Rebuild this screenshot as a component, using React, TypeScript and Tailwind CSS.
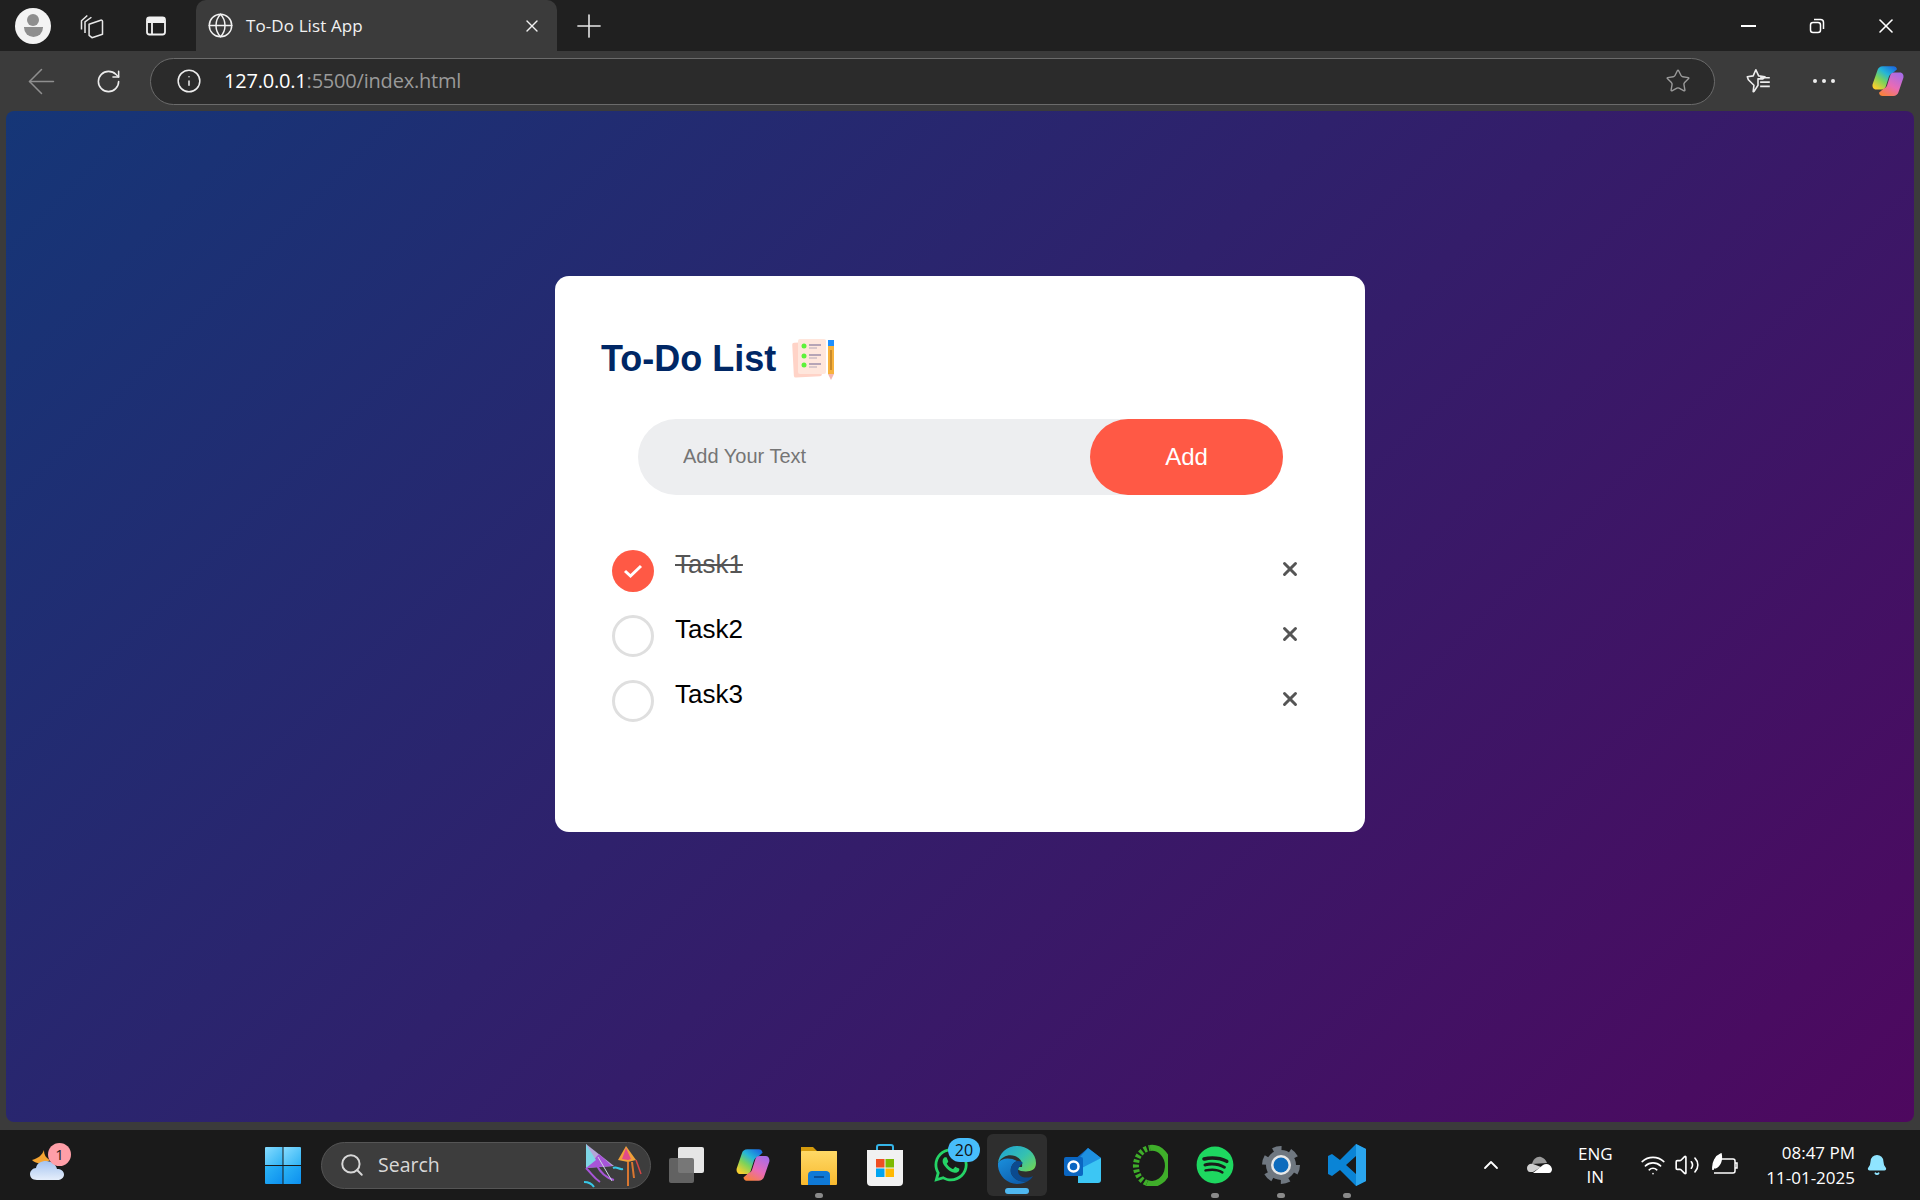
import React from 'react'
import { ArrowLeft, Bell, ChevronUp, Globe, Info, Plus, RotateCw, Search, Star, Volume2, Wifi, X } from 'lucide-react'
import { FaSpotify, FaWhatsapp } from 'react-icons/fa'

const Copilot = ({ size, id }: { size: number; id: string }) => (
  <svg width={size} height={size} viewBox="0 0 32 32">
    <defs>
      <linearGradient id={`${id}a`} x1="0.8" y1="0" x2="0.1" y2="0.9">
        <stop offset="0" stopColor="#1b6fe0" />
        <stop offset="0.35" stopColor="#25b6d8" />
        <stop offset="0.65" stopColor="#7bd35a" />
        <stop offset="1" stopColor="#f7cf2f" />
      </linearGradient>
      <linearGradient id={`${id}b`} x1="0.8" y1="0" x2="0.2" y2="1">
        <stop offset="0" stopColor="#a66ce8" />
        <stop offset="0.55" stopColor="#e96bb5" />
        <stop offset="1" stopColor="#f8813c" />
      </linearGradient>
    </defs>
    <path d="M11 2h10c2 0 3 1 3.500 3L20 9c-2 .5-3 2-3.500 4l-2.500 8c-.5 2-2 3-4 3H5c-3 0-4-2.500-3.500-5L6 6c.6-2.500 2.500-4 5-4z" fill={`url(#${id}a)`} />
    <path d="M21 30H11c-2 0-3-1-3.500-3l4.500-4c2-.5 3-2 3.500-4l2.500-8c.5-2 2-3 4-3h5c3 0 4 2.500 3.500 5L26 26c-.6 2.500-2.500 4-5 4z" fill={`url(#${id}b)`} />
  </svg>
)

const Collections = () => (
  <svg width="28" height="28" viewBox="0 0 24 24" fill="none" stroke="#e8e8e8" strokeWidth="1.300" strokeLinejoin="round">
    <path d="M3 15V7.500L8 3" />
    <path d="M6 18V8.500L11.500 4.500" />
    <path d="M9.500 10.500l10-3.500c.7-.2 1.500.3 1.500 1v11l-9 3-2.500-2z" />
  </svg>
)

const TabActions = () => (
  <svg width="24" height="24" viewBox="0 0 24 24" fill="none" stroke="#f2f2f2" strokeWidth="1.800">
    <rect x="3" y="3.500" width="18" height="17" rx="2.500" />
    <path d="M3 8h18M8 8v12" />
    <path d="M4 4h16v4H4z" fill="#f2f2f2" stroke="none" />
  </svg>
)

const Restore = () => (
  <svg width="18" height="18" viewBox="0 0 18 18" fill="none" stroke="#fff" strokeWidth="1.500">
    <rect x="2.500" y="5.500" width="10" height="10" rx="2.500" />
    <path d="M6 2.500h6.500c1.800 0 3 1.200 3 3V12" />
  </svg>
)

const FavoritesStar = () => (
  <svg width="30" height="30" viewBox="0 0 28 28" fill="none" stroke="#ededed" strokeWidth="1.500" strokeLinejoin="round">
    <path d="M12 3.500l2.600 5.700 5.900.8-2 2h-4.500v6l-3.500 5.500-1 .5.7-6L5 12.800l-1-2.700 5.500-.9z" />
    <path d="M16 14h9M16 18h9M16 22h9" transform="translate(0 -3)" />
  </svg>
)

const Weather = () => (
  <svg width="38" height="38" viewBox="0 0 38 38">
    <defs>
      <linearGradient id="cloudFill" x1="0" y1="0" x2="0" y2="1">
        <stop offset="0" stopColor="#a5c4f0" />
        <stop offset="1" stopColor="#e5eefb" />
      </linearGradient>
    </defs>
    <path d="M15 4c-2 5-5 8-12 10 4 4 12 5 18 0-4-2-6-5-6-10z" fill="#f5a431" />
    <path d="M8 34c-5 0-7-3-7-6s3-6 6-6c1-5 5-7 10-7s10 3 11 8c4 0 7 2 7 5.500S32 34 28 34z" fill="url(#cloudFill)" />
  </svg>
)

const StartLogo = () => (
  <svg width="36" height="38" viewBox="0 0 36 38">
    <defs>
      <linearGradient id="winA" x1="0" y1="0" x2="1" y2="1">
        <stop offset="0" stopColor="#86dcff" />
        <stop offset="1" stopColor="#2fb2f4" />
      </linearGradient>
      <linearGradient id="winB" x1="0" y1="0" x2="1" y2="1">
        <stop offset="0" stopColor="#2cb5f6" />
        <stop offset="1" stopColor="#0c8fef" />
      </linearGradient>
    </defs>
    <path d="M1 1h16.500v18H0V2a1 1 0 0 1 1-1z" fill="url(#winA)" />
    <path d="M18.500 1H35a1 1 0 0 1 1 1v17H18.500z" fill="url(#winA)" />
    <path d="M0 20h17.500v18H1a1 1 0 0 1-1-1z" fill="url(#winB)" />
    <path d="M18.500 20H36v17a1 1 0 0 1-1 1H18.500z" fill="url(#winB)" />
  </svg>
)

const Kites = () => (
  <svg width="62" height="46" viewBox="0 0 62 46" fill="none">
    <path d="M4 2L4 26 32 24z" fill="#b4a6d8" />
    <path d="M4 26l13-14 13 12z" fill="#a855d8" />
    <path d="M4 2l10 16L4 26z" fill="#7fd6e6" />
    <path d="M4 26c6 6 8 10 14 14M14 22c4 8 10 14 18 16" stroke="#a855d8" strokeWidth="2" />
    <path d="M2 40c4 0 8 2 10 5" stroke="#38c8e8" strokeWidth="2" />
    <path d="M16 15l14 24" stroke="#cbd5e1" strokeWidth="1" />
    <path d="M31 26c4-2 6 2 10 1" stroke="#38c8e8" strokeWidth="2" />
    <path d="M44 4l-8 14 10 2 8-2z" fill="#f0a03a" />
    <path d="M44 6l-4 11 6 1 3-1z" fill="#e14a8a" />
    <path d="M46 20v24M50 20l2 16" stroke="#d97730" strokeWidth="2" />
    <path d="M54 18l5 14" stroke="#d64545" strokeWidth="1.500" />
  </svg>
)

const TaskView = () => (
  <svg width="38" height="38" viewBox="0 0 38 38">
    <rect x="10" y="1" width="26" height="26" rx="2" fill="#e6e6e6" />
    <rect x="1" y="12" width="25" height="25" rx="2" fill="#6a6a6a" fillOpacity="0.9" />
  </svg>
)

const Explorer = () => (
  <svg width="38" height="40" viewBox="0 0 38 40">
    <defs>
      <linearGradient id="folderFill" x1="0" y1="0" x2="0" y2="1">
        <stop offset="0" stopColor="#ffd966" />
        <stop offset="1" stopColor="#f8b92e" />
      </linearGradient>
    </defs>
    <path d="M1 2h12l4 4h20v6H1z" fill="#d49a0c" />
    <rect x="1" y="6" width="36" height="34" rx="1" fill="url(#folderFill)" />
    <path d="M8 40V30c0-3 2-4 4-4h14c2 0 4 1 4 4v10z" fill="#0f79d6" />
    <rect x="14" y="31" width="10" height="2" fill="#0a4f96" />
  </svg>
)

const Store = () => (
  <svg width="38" height="42" viewBox="0 0 38 42">
    <path d="M11 7V3c0-1 1-2 2-2h12c1 0 2 1 2 2v4" fill="none" stroke="#35b5e8" strokeWidth="2" />
    <path d="M1 6h36v32a4 4 0 0 1-4 4H5a4 4 0 0 1-4-4z" fill="#f1f1f1" />
    <rect x="10" y="15" width="8.500" height="8.500" fill="#ef4f23" />
    <rect x="19.500" y="15" width="8.500" height="8.500" fill="#7eba01" />
    <rect x="10" y="24.500" width="8.500" height="8.500" fill="#01a4ef" />
    <rect x="19.500" y="24.500" width="8.500" height="8.500" fill="#ffb902" />
  </svg>
)

const Edge = () => (
  <svg width="38" height="38" viewBox="0 0 38 38">
    <defs>
      <linearGradient id="edgeTop" x1="0" y1="0" x2="1" y2="0.8">
        <stop offset="0" stopColor="#1d9fd8" />
        <stop offset="0.6" stopColor="#35c1b0" />
        <stop offset="1" stopColor="#6bd35c" />
      </linearGradient>
      <linearGradient id="edgeBlue" x1="0" y1="0" x2="0.7" y2="1">
        <stop offset="0" stopColor="#1a8fdc" />
        <stop offset="1" stopColor="#0d5fae" />
      </linearGradient>
    </defs>
    <path d="M19 0C9 0 1 7 0 17c4-7 11-9 17-7 5 2 8 6 7 11h-4c-2 0-1 3 3 4 6 1 15 1 15-8C38 7 29 0 19 0z" fill="url(#edgeTop)" />
    <path d="M0 17C-1 28 8 38 19 38c4 0 8-1 11-3-8 2-15-2-17-8-1-5 1-10 6-12-7-4-16-3-19 2z" fill="url(#edgeBlue)" />
    <path d="M13 27c2 6 9 10 17 8 2-1 4-3 5-5-5 3-15 2-15-5 0-3 2-6 5-8-2-2-4-2-6-2-5 2-7 7-6 12z" fill="#0b4a8f" />
  </svg>
)

const Outlook = () => (
  <svg width="38" height="38" viewBox="0 0 38 38">
    <path d="M10 14L24 2l13 10v10H10z" fill="#1068c4" />
    <path d="M24 2l13 10-20 12-7-6z" fill="#1e90e0" />
    <path d="M14 24l23-12v22c0 2-1 3-3 3H14z" fill="#3cc6f4" />
    <rect x="0" y="11" width="19" height="19" rx="2" fill="#0a66c2" />
    <circle cx="9.500" cy="20.500" r="5" fill="none" stroke="#fff" strokeWidth="2.500" />
  </svg>
)

const RingApp = () => (
  <svg width="38" height="42" viewBox="0 0 38 42" fill="none">
    <path d="M20 4a16 18 0 1 1-3 35" stroke="#3fae2a" strokeWidth="6" />
    <path d="M17 39A16 18 0 0 1 20 4" stroke="#3fae2a" strokeWidth="6" strokeDasharray="3 2" />
  </svg>
)

const Gear = () => (
  <svg width="38" height="40" viewBox="0 0 38 40" fill="none">
    <circle cx="19" cy="20" r="15" fill="#6f7780" />
    <circle cx="19" cy="20" r="16.500" stroke="#6f7780" strokeWidth="5" strokeDasharray="8.600 8.700" />
    <circle cx="19" cy="20" r="10" fill="#e8e8e8" />
    <circle cx="19" cy="20" r="7.500" fill="#0f6cbd" />
  </svg>
)

const VsCode = () => (
  <svg width="38" height="42" viewBox="0 0 38 42">
    <path d="M28 0l10 5v32l-10 5-16-16-8 6-4-2V12l4-2 8 6zM28 12l-10 9 10 9z" fill="#0a84d6" fillRule="evenodd" />
    <path d="M28 0l10 5v32l-10 5z" fill="#2aa5ee" />
  </svg>
)

const OneDrive = () => (
  <svg width="26" height="18" viewBox="0 0 26 18">
    <path d="M6 8c1-5 5-8 9-7 3 1 5 3 6 6z" fill="#9a9a9a" />
    <path d="M1 12c0-3 3-5 6-4l8 3-8 5H4c-2 0-3-2-3-4z" fill="#d0d0d0" />
    <path d="M7 17l10-8c3-2 8-1 9 4 0 2-1 4-3 4z" fill="#ffffff" />
  </svg>
)

const Battery = () => (
  <svg width="26" height="24" viewBox="0 0 26 24" fill="none" stroke="#fff" strokeWidth="1.500">
    <path d="M9 6h12c1 0 2 1 2 2v10c0 1-1 2-2 2H2" />
    <path d="M23 10h2v5h-2" />
    <path d="M1 17C0 9 4 3 9 1c1 5 0 12-6 14" fill="#fff" />
  </svg>
)

const Dot = () => <div className="w-[8px] h-[5px] rounded-full bg-[#8a8a8a]" />

const TaskbarApp = ({ children, dot }: { children: React.ReactNode; dot?: boolean }) => (
  <div className="relative w-[66px] h-[70px] flex items-center justify-center">
    {children}
    {dot && (
      <div className="absolute bottom-[2px] left-[29px]">
        <Dot />
      </div>
    )}
  </div>
)

const tasks = [
  { name: 'Task1', done: true },
  { name: 'Task2', done: false },
  { name: 'Task3', done: false },
]

const App = () => {
  return (
    <div className="w-[1920px] h-[1200px] flex flex-col overflow-hidden bg-[#3b3b3b] [font-family:'Open_Sans',sans-serif]">
      <div className="h-[51px] bg-[#202020] flex items-end shrink-0">
        <div className="h-[51px] flex items-center">
          <div className="ml-[15px] w-[36px] h-[36px] rounded-full bg-[#f3f3f3] flex flex-col items-center justify-center">
            <div className="w-[12px] h-[12px] rounded-full bg-[#8e8e8e]" />
            <div className="w-[19px] h-[10px] mt-[1px] rounded-b-full rounded-t-[4px] bg-[#8e8e8e]" />
          </div>
          <div className="ml-[27px]">
            <Collections />
          </div>
          <div className="ml-[38px]">
            <TabActions />
          </div>
        </div>
        <div className="ml-[28px] w-[361px] h-[51px] bg-[#3b3b3b] rounded-t-[10px] flex items-center pl-[11px] pr-[15px] text-[#f2f2f2]">
          <Globe size={27} strokeWidth={1.3} />
          <span className="ml-[12px] text-[17px] tracking-[0.1px] flex-1">To-Do List App</span>
          <X size={20} strokeWidth={1.6} />
        </div>
        <div className="h-[51px] flex items-center ml-[13px] text-[#e8e8e8]">
          <Plus size={38} strokeWidth={1} />
        </div>
        <div className="flex-1" />
        <div className="h-[51px] flex items-center gap-[45px] pr-[22px] text-white">
          <div className="w-[24px] flex justify-center">
            <div className="w-[15px] h-[2px] bg-white" />
          </div>
          <div className="w-[24px] flex justify-center">
            <Restore />
          </div>
          <div className="w-[24px] flex justify-center">
            <X size={24} strokeWidth={1.6} />
          </div>
        </div>
      </div>

      <div className="h-[60px] flex items-center shrink-0 text-[#ededed]">
        <ArrowLeft className="ml-[21px] text-[#8f8f8f]" size={41} strokeWidth={0.9} />
        <RotateCw className="ml-[33px]" size={27} strokeWidth={1.4} />
        <div className="ml-[28px] w-[1565px] h-[47px] rounded-full bg-[#2b2b2b] border border-[#6b6b6b] flex items-center pl-[25px] pr-[23px]">
          <Info size={26} strokeWidth={1.4} />
          <div className="ml-[22px] flex-1 text-[20px] text-[#9a9a9a] tracking-[-0.2px]">
            <span className="text-white">127.0.0.1</span>:5500/index.html
          </div>
          <Star size={26} strokeWidth={1.3} className="text-[#9a9a9a]" />
        </div>
        <div className="ml-[28px]">
          <FavoritesStar />
        </div>
        <div className="ml-[40px] flex gap-[5px]">
          <div className="w-[4px] h-[4px] rounded-full bg-[#ededed]" />
          <div className="w-[4px] h-[4px] rounded-full bg-[#ededed]" />
          <div className="w-[4px] h-[4px] rounded-full bg-[#ededed]" />
        </div>
        <div className="ml-[36px]">
          <Copilot size={34} id="copA" />
        </div>
      </div>

      <div className="h-[1011px] shrink-0 mx-[6px] rounded-lg bg-linear-[135deg,#153677,#4e085f] flex justify-center items-start pt-[165px] [font-family:'Liberation_Sans',sans-serif]">
        <div className="w-[810px] h-[556px] bg-white rounded-[14px] pt-[59px] pl-[46px]">
          <div className="flex items-center h-[48px]">
            <h2 className="text-[36px] font-bold text-[#002765] leading-none">To-Do List</h2>
            <svg className="ml-[16px]" width="44" height="44" viewBox="0 0 44 44">
              <rect x="1" y="5" width="28" height="35" rx="2" fill="#ffd3c7" transform="rotate(-3 15 22)" />
              <rect x="6" y="2" width="28" height="35" rx="2" fill="#ffe6dc" />
              <circle cx="12" cy="9" r="2.500" fill="#5df23a" />
              <circle cx="12" cy="19" r="2.500" fill="#5df23a" />
              <circle cx="12" cy="28" r="2.500" fill="#5df23a" />
              <path d="M17 8h12M17 18h12M17 27h12" stroke="#6f6390" strokeWidth="1.200" />
              <path d="M17 11h8M17 21h8M17 30h8" stroke="#b5a8b8" strokeWidth="1.200" />
              <rect x="36" y="3" width="6" height="6" fill="#1e90ff" />
              <rect x="36" y="9" width="6" height="28" fill="#f7b23d" />
              <rect x="38" y="13" width="2" height="20" fill="#c98a2a" />
              <path d="M36 37h6l-3 6z" fill="#f4b6b0" />
            </svg>
          </div>
          <div className="ml-[37px] mt-[36px] w-[645px] h-[76px] rounded-full bg-[#edeef0] flex items-center">
            <input
              className="flex-1 min-w-0 bg-transparent outline-none pl-[45px] pb-[2px] text-[20px] placeholder:text-[#757575]"
              placeholder="Add Your Text"
            />
            <button className="w-[193px] h-[76px] rounded-full bg-[#ff5945] text-white text-[24px]">Add</button>
          </div>
          <ul className="mt-[51px] pl-[11px] w-[701px]">
            {tasks.map((t) => (
              <li key={t.name} className="h-[65px] flex items-start">
                <div
                  className={
                    t.done
                      ? 'mt-[4px] w-[42px] h-[42px] rounded-full bg-[#ff5945] flex items-center justify-center'
                      : 'mt-[4px] w-[42px] h-[42px] rounded-full border-[3.5px] border-[#dfdfdf]'
                  }
                >
                  {t.done && (
                    <svg width="22" height="18" viewBox="0 0 22 18" fill="none" stroke="#fff" strokeWidth="3">
                      <path d="M3 9l5.500 5L19 4" />
                    </svg>
                  )}
                </div>
                <span className={t.done ? 'ml-[21px] mt-[4px] text-[26px] leading-[29px] text-[#555] line-through' : 'ml-[21px] mt-[4px] text-[26px] leading-[29px] text-black'}>
                  {t.name}
                </span>
                <div className="flex-1" />
                <div className="mt-[11px] w-[24px] h-[24px] flex items-center justify-center text-[#555]">
                  <X size={22} strokeWidth={3.2} />
                </div>
              </li>
            ))}
          </ul>
        </div>
      </div>

      <div className="h-[8px] shrink-0" />

      <div className="h-[70px] shrink-0 bg-[#1a1a1a] flex items-center text-white">
        <div className="relative ml-[29px] w-[38px]">
          <Weather />
          <div className="absolute -top-[3px] left-[19px] w-[23px] h-[23px] rounded-full bg-[#ff9fa8] text-[#222] text-[15px] leading-[23px] text-center">
            1
          </div>
        </div>
        <div className="ml-[198px]">
          <StartLogo />
        </div>
        <div className="ml-[20px] w-[330px] h-[47px] rounded-full bg-[#3d3d3d] border border-[#555] flex items-center pl-[17px] pr-[6px] text-[#d8d8d8]">
          <Search size={26} strokeWidth={1.8} />
          <span className="ml-[13px] flex-1 text-[19.500px]">Search</span>
          <Kites />
        </div>
        <div className="ml-[3px] flex">
          <TaskbarApp>
            <TaskView />
          </TaskbarApp>
          <TaskbarApp>
            <Copilot size={36} id="copB" />
          </TaskbarApp>
          <TaskbarApp dot>
            <Explorer />
          </TaskbarApp>
          <TaskbarApp>
            <Store />
          </TaskbarApp>
          <TaskbarApp>
            <div className="relative">
              <FaWhatsapp className="text-[#25d366]" size={38} />
              <div className="absolute -top-[8px] left-[16px] w-[32px] h-[24px] rounded-full bg-[#47bdfb] text-[#111] text-[16px] leading-[24px] text-center">
                20
              </div>
            </div>
          </TaskbarApp>
          <div className="relative w-[66px] h-[70px] flex items-center justify-center">
            <div className="w-[60px] h-[62px] rounded-md bg-[#2e2e2e] flex items-center justify-center">
              <Edge />
            </div>
            <div className="absolute bottom-[6px] left-[21px] w-[24px] h-[6px] rounded-full bg-[#4fb8f0]" />
          </div>
          <TaskbarApp>
            <Outlook />
          </TaskbarApp>
          <TaskbarApp>
            <RingApp />
          </TaskbarApp>
          <TaskbarApp dot>
            <FaSpotify className="text-[#1ed760]" size={38} />
          </TaskbarApp>
          <TaskbarApp dot>
            <Gear />
          </TaskbarApp>
          <TaskbarApp dot>
            <VsCode />
          </TaskbarApp>
        </div>
        <div className="flex-1" />
        <ChevronUp size={24} strokeWidth={1.8} />
        <div className="ml-[23px]">
          <OneDrive />
        </div>
        <div className="ml-[23px] w-[40px] text-center text-[17px] leading-[23px]">
          <div>ENG</div>
          <div>IN</div>
        </div>
        <Wifi className="ml-[25px]" size={26} strokeWidth={1.5} />
        <Volume2 className="ml-[8px]" size={26} strokeWidth={1.5} />
        <div className="ml-[12px]">
          <Battery />
        </div>
        <div className="ml-[28px] text-right text-[17px] leading-[25px]">
          <div>08:47 PM</div>
          <div>11-01-2025</div>
        </div>
        <Bell className="ml-[11px] mr-[32px] text-[#8fe4ff]" size={22} fill="#8fe4ff" />
      </div>
    </div>
  )
}

export default App
